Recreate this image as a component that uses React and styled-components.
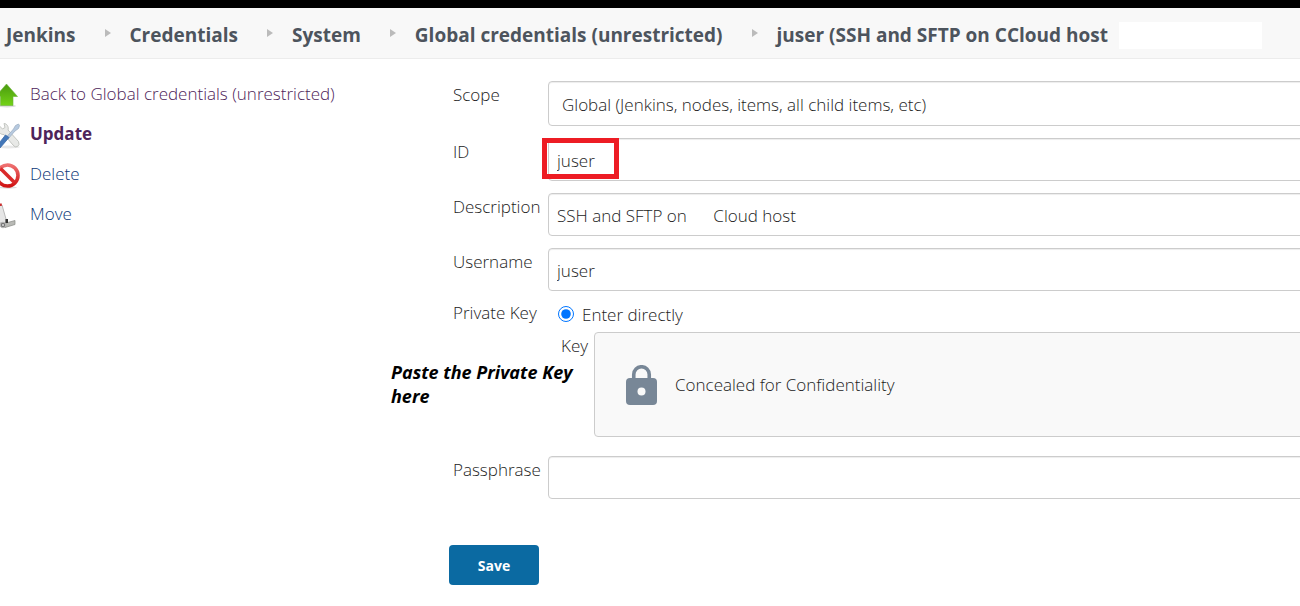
import React from "react";
import styled, { createGlobalStyle } from "styled-components";

const Global = createGlobalStyle`
  *, *::before, *::after { box-sizing: border-box; }
  body {
    margin: 0;
    background: #fff;
    color: #1c1c1c;
    font-family: "Open Sans", "Noto Sans", sans-serif;
    font-size: 17px;
    font-weight: 300;
    line-height: 28px;
    overflow-x: hidden;
  }
`;

const Page = styled.div`
  border-top: 8px solid #000;
  overflow: hidden;
`;

const Breadcrumbs = styled.nav`
  display: flex;
  align-items: center;
  height: 51px;
  padding: 4px 6px 0;
  background: #f8f8f8;
  border-bottom: 1px solid #ececec;
  white-space: nowrap;
`;

const Crumb = styled.a`
  color: #4d545d;
  font-size: 19px;
  font-weight: 700;
  text-decoration: none;
`;

const Arrow = styled.span`
  margin: 0 19px 4px 29px;
  border-left: 6px solid #bbb;
  border-top: 4px solid transparent;
  border-bottom: 4px solid transparent;
`;

const Redaction = styled.span`
  width: 143px;
  height: 27px;
  margin-left: 11px;
  background: #fff;
`;

const Columns = styled.div`
  display: flex;
`;

const Sidebar = styled.nav`
  flex: 0 0 449px;
  padding-top: 15px;
`;

const Task = styled.a`
  display: flex;
  align-items: center;
  gap: 10px;
  height: 40px;
  color: ${(p) => (p.$visited ? "#4e2459" : "#0d3878")};
  font-weight: ${(p) => (p.$active ? 700 : 300)};
  text-decoration: none;

  svg {
    flex: none;
    margin-top: 4px;
  }
`;

const Form = styled.form`
  flex: 1;
  padding: 22px 0 20px;
  margin-right: -8px;
`;

const Row = styled.div`
  display: grid;
  grid-template-columns: 95px 1fr;
  padding-left: 4px;
  margin-bottom: ${(p) => p.$gap ?? 12}px;
`;

const Label = styled.label`
  white-space: nowrap;
`;

const Field = styled.div`
  position: relative;
`;

const Input = styled.input`
  display: block;
  width: 100%;
  height: 43px;
  padding: 2px 8px 0;
  border: 1px solid #ccc;
  border-radius: 4px;
  background: #fff;
  box-shadow: inset 0 1px 1px rgba(0, 0, 0, 0.075);
  color: inherit;
  font: inherit;
  outline: none;
`;

const Select = styled.select`
  display: block;
  width: 100%;
  height: 45px;
  padding: 2px 13px 0;
  border: 1px solid #ccc;
  border-radius: 4px;
  background: #fff;
  box-shadow: inset 0 1px 1px rgba(0, 0, 0, 0.075);
  color: inherit;
  font: inherit;
  appearance: none;
  outline: none;
`;

const Highlight = styled.span`
  position: absolute;
  top: 0;
  left: -6px;
  width: 77px;
  height: 41px;
  border: 5px solid #ed1c24;
  pointer-events: none;
`;

const RadioLine = styled.div`
  display: flex;
  align-items: center;
  gap: 8px;
  height: 28px;
  padding-left: 10px;

  label {
    padding-top: 4px;
  }
`;

const Radio = styled.input`
  width: 16px;
  height: 16px;
  margin: 2px 0 0;
  accent-color: #0075ff;
`;

const KeyRow = styled.div`
  position: relative;
  display: flex;
  justify-content: space-between;
  padding-left: 112px;
  margin-top: 5px;
  margin-bottom: 19px;
`;

const KeyLabel = styled.span`
  flex: 0 0 33px;
`;

const Concealed = styled.div`
  flex: 1;
  display: flex;
  align-items: center;
  gap: 18px;
  height: 105px;
  padding-left: 31px;
  border: 1px solid #ccc;
  border-radius: 4px;
  background: #f9f9f9;
`;

const Note = styled.strong`
  position: absolute;
  top: 28px;
  left: -58px;
  width: 190px;
  color: #000;
  font-size: 18px;
  font-style: italic;
  font-weight: 700;
  line-height: 24px;
`;

const Save = styled.button`
  display: block;
  width: 90px;
  height: 40px;
  margin-top: 46px;
  border: 0;
  border-radius: 4px;
  background: #0b6aa2;
  color: #fff;
  font-family: inherit;
  font-size: 14px;
  font-weight: 700;
`;

const UpIcon = () => (
  <svg width="20" height="24" viewBox="4 0 20 24" aria-hidden="true">
    <defs>
      <linearGradient id="up" x1="0" y1="0" x2="0" y2="1">
        <stop offset="0" stopColor="#4a9a10" />
        <stop offset="1" stopColor="#73d216" />
      </linearGradient>
    </defs>
    <ellipse cx="11" cy="22" rx="9" ry="1.5" fill="#ddd" />
    <path d="M10.500 0 21.500 12.500H17V21.500H4.500V12.500H-.5Z" fill="url(#up)" stroke="#6cb33c" strokeWidth=".6" />
  </svg>
);

const ToolsIcon = () => (
  <svg width="20" height="26" viewBox="4 0 20 26" aria-hidden="true">
    <ellipse cx="12" cy="24" rx="12" ry="1.500" fill="#e8e8e8" />
    <path d="M3 2.500 6.500 6 9 4.500 8 .5C11 .5 13 4 12 7L22.500 18.500Q24 22 21.500 23.500T17 22L8 11.500C5 12 2 9 2 6Z" fill="#e8e9e7" stroke="#c3c6c1" strokeWidth="1" />
    <path d="m10.500 14 7-8 2-3.500 3-1.500 1 1.500-1 3-3.500 2.500-7 8Z" fill="#b6c9df" stroke="#9fb1c5" strokeWidth=".8" />
    <path d="M13 14.500 4 25 0 24 9.500 12Z" fill="#4377b8" stroke="#3a69a8" strokeWidth=".8" />
  </svg>
);

const StopIcon = () => (
  <svg width="20" height="26" viewBox="4 0 20 26" aria-hidden="true">
    <defs>
      <linearGradient id="stop" x1="0" y1="0" x2="0" y2="1">
        <stop offset="0" stopColor="#ee7070" />
        <stop offset="1" stopColor="#d01414" />
      </linearGradient>
    </defs>
    <ellipse cx="12" cy="24.500" rx="9" ry="1.200" fill="#ddd" />
    <circle cx="11.500" cy="12.500" r="10.500" fill="#fff" stroke="url(#stop)" strokeWidth="3.600" />
    <path d="m4.500 5.500 14 14" stroke="#da2a2a" strokeWidth="3.600" />
  </svg>
);

const TruckIcon = () => (
  <svg width="20" height="26" viewBox="4 0 20 26" aria-hidden="true">
    <path d="M8 20.500 19 17.500V21.500L9 24.500Z" fill="#b9bab6" stroke="#888a85" strokeWidth=".7" />
    <path d="M3 1.500 6 2 10 16 9.500 20 3 20Z" fill="#e6e6e6" stroke="#aaa" strokeWidth=".8" />
    <path d="M4 .5h1.800v2.500H4Z" fill="#cc3030" />
    <path d="M9.500 16h2.500v4h-2.500Z" fill="#333" />
    <circle cx="7" cy="22" r="2.800" fill="#777" stroke="#bbb" />
    <circle cx="7" cy="22" r="1" fill="#ddd" />
  </svg>
);

const LockIcon = () => (
  <svg width="31" height="40" viewBox="0 0 31 40" aria-hidden="true">
    <path d="M7.750 15V9.500a7.750 7.750 0 0 1 15.500 0V15" fill="none" stroke="#788797" strokeWidth="3.600" />
    <rect y="13" width="31" height="27" rx="4" fill="#788797" />
    <circle cx="15.500" cy="26.500" r="4" fill="#f9f9f9" />
  </svg>
);

const crumbs = [
  "Jenkins",
  "Credentials",
  "System",
  "Global credentials (unrestricted)",
  "juser (SSH and SFTP on CCloud host",
];

const tasks = [
  { text: "Back to Global credentials (unrestricted)", Icon: UpIcon, visited: true },
  { text: "Update", Icon: ToolsIcon, visited: true, active: true },
  { text: "Delete", Icon: StopIcon },
  { text: "Move", Icon: TruckIcon },
];

export default function App() {
  return (
    <>
      <Global />
      <Page>
        <Breadcrumbs aria-label="Breadcrumb">
          {crumbs.map((text, i) => (
            <React.Fragment key={text}>
              {i > 0 && <Arrow />}
              <Crumb href="#">{text}</Crumb>
            </React.Fragment>
          ))}
          <Redaction />
        </Breadcrumbs>
        <Columns>
          <Sidebar aria-label="Tasks">
            {tasks.map(({ text, Icon, visited, active }) => (
              <Task key={text} href="#" $visited={visited} $active={active}>
                <Icon />
                {text}
              </Task>
            ))}
          </Sidebar>
          <Form onSubmit={(e) => e.preventDefault()}>
            <Row>
              <Label htmlFor="scope">Scope</Label>
              <Select id="scope">
                <option>Global (Jenkins, nodes, items, all child items, etc)</option>
              </Select>
            </Row>
            <Row>
              <Label htmlFor="cred-id">ID</Label>
              <Field>
                <Input id="cred-id" defaultValue="juser" />
                <Highlight />
              </Field>
            </Row>
            <Row>
              <Label htmlFor="description">Description</Label>
              <Input
                id="description"
                defaultValue={"SSH and SFTP on\u00a0\u00a0\u00a0\u00a0\u00a0\u00a0Cloud host"}
              />
            </Row>
            <Row $gap={8}>
              <Label htmlFor="username">Username</Label>
              <Input id="username" defaultValue="juser" />
            </Row>
            <Row $gap={0}>
              <span>Private Key</span>
              <RadioLine>
                <Radio type="radio" id="direct" name="source" defaultChecked />
                <label htmlFor="direct">Enter directly</label>
              </RadioLine>
            </Row>
            <KeyRow>
              <KeyLabel>Key</KeyLabel>
              <Concealed>
                <LockIcon />
                <span>Concealed for Confidentiality</span>
              </Concealed>
              <Note>Paste the Private Key here</Note>
            </KeyRow>
            <Row $gap={0}>
              <Label htmlFor="passphrase">Passphrase</Label>
              <Input id="passphrase" type="password" />
            </Row>
            <Save type="submit">Save</Save>
          </Form>
        </Columns>
      </Page>
    </>
  );
}
